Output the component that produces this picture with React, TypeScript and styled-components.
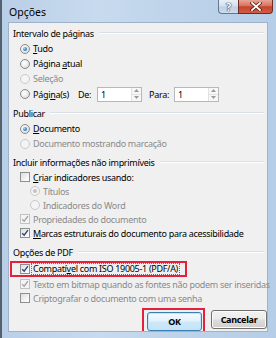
import React from "react"
import styled, { createGlobalStyle } from "styled-components"

const GlobalStyle = createGlobalStyle`
	html, body {
		margin: 0;
		padding: 0;
		background: #ffffff;
	}
	body {
		font-family: "Noto Sans", "DejaVu Sans", sans-serif;
		font-size: 9px;
		letter-spacing: -0.3px;
		color: #111;
	}
`

const Options: React.FC = () => {
	return (
		<Window>
			<TitleBar>
				<Title>Opções</Title>
				<Caption>
					<HelpButton>?</HelpButton>
					<CloseButton>
						<svg width="12" height="9" viewBox="0 0 12 9">
							<path d="M2 1 L10 8 M10 1 L2 8" stroke="#5a1c14" strokeWidth="3.4" strokeLinecap="square" />
							<path d="M2 1 L10 8 M10 1 L2 8" stroke="#ffffff" strokeWidth="1.8" strokeLinecap="square" />
						</svg>
					</CloseButton>
				</Caption>
			</TitleBar>

			<Client>
				<GroupHeader>
					<span>Intervalo de páginas</span>
					<Rule />
				</GroupHeader>
				<Row $h={15}>
					<Radio $checked />
					<Label><u>T</u>udo</Label>
				</Row>
				<Row $h={15}>
					<Radio />
					<Label>Página <u>a</u>tual</Label>
				</Row>
				<Row $h={15}>
					<Radio $disabled />
					<Label $disabled>Seleção</Label>
				</Row>
				<Row $h={16}>
					<Radio />
					<Label $w={45}>Pági<u>n</u>a(s)</Label>
					<FieldLabel $w={19}>De:</FieldLabel>
					<Spin value="1" />
					<FieldLabel $w={25} $gap={7}>Para:</FieldLabel>
					<Spin value="1" />
				</Row>

				<GroupHeader $top={4}>
					<span>Publicar</span>
					<Rule />
				</GroupHeader>
				<Row $h={15}>
					<Radio $checked />
					<Label><u>D</u>ocumento</Label>
				</Row>
				<Row $h={15}>
					<Radio $disabled />
					<Label $disabled>Documento mostrando marcação</Label>
				</Row>

				<GroupHeader $top={4}>
					<span>Incluir informações não imprimíveis</span>
					<Rule />
				</GroupHeader>
				<Row $h={14}>
					<Check />
					<Label><u>C</u>riar indicadores usando:</Label>
				</Row>
				<Row $h={14} $indent={10}>
					<Radio $disabled $checked />
					<Label $disabled>Títulos</Label>
				</Row>
				<Row $h={14} $indent={10}>
					<Radio $disabled />
					<Label $disabled>Indicadores do Word</Label>
				</Row>
				<Row $h={14}>
					<Check $checked $disabled />
					<Label $disabled>Propriedades do documento</Label>
				</Row>
				<Row $h={14}>
					<Check $checked />
					<Label><u>M</u>arcas estruturais do documento para acessibilidade</Label>
				</Row>

				<GroupHeader $top={5} $bottom={2}>
					<span>Opções de PDF</span>
					<Rule />
				</GroupHeader>
				<Highlight>
					<Check $checked />
					<FocusLabel>Compatí<u>v</u>el com ISO 19005-1 (PDF/A)</FocusLabel>
				</Highlight>
				<Row $h={14}>
					<Check $checked $disabled />
					<Label $disabled>Texto em bitmap quando as fontes não podem ser inseridas</Label>
				</Row>
				<Row $h={14}>
					<Check />
					<Label $disabled>Criptografar o documento com uma senha</Label>
				</Row>

				<Buttons>
					<ButtonMark>
						<Button $default>OK</Button>
					</ButtonMark>
					<Button>Cancelar</Button>
				</Buttons>
			</Client>
		</Window>
	)
}

const Spin: React.FC<{ value: string }> = ({ value }) => (
	<SpinBox>
		<SpinValue>{value}</SpinValue>
		<SpinArrows>
			<SpinArrow>
				<svg width="5" height="3" viewBox="0 0 5 3">
					<path d="M0 3 L2.5 0 L5 3 Z" fill="#9a9a9a" />
				</svg>
			</SpinArrow>
			<SpinArrow>
				<svg width="5" height="3" viewBox="0 0 5 3">
					<path d="M0 0 L2.5 3 L5 0 Z" fill="#9a9a9a" />
				</svg>
			</SpinArrow>
		</SpinArrows>
	</SpinBox>
)

const Check: React.FC<{ $checked?: boolean; $disabled?: boolean }> = ({ $checked, $disabled }) => (
	<CheckBox $disabled={$disabled}>
		{$checked && (
			<svg width="8" height="8" viewBox="0 0 8 8">
				<path
					d="M1.2 4.2 L3.2 6.2 L6.9 1.2"
					fill="none"
					stroke={$disabled ? "#a4a4a4" : "#33427a"}
					strokeWidth="1.4"
				/>
			</svg>
		)}
	</CheckBox>
)

const Window = styled.div`
	width: 276px;
	height: 338px;
	box-sizing: border-box;
	display: flex;
	flex-direction: column;
	border-left: 2px solid #56616e;
	background: linear-gradient(90deg, #b9cfe8 0%, #c8daee 35%, #bfd4ea 60%, #b6cde7 100%);
`

const TitleBar = styled.div`
	height: 22px;
	display: flex;
	align-items: flex-start;
	flex-shrink: 0;
`

const Title = styled.span`
	margin: 5px 0 0 7px;
	font-size: 10.5px;
	line-height: 14px;
	letter-spacing: 0;
	color: #000;
`

const Caption = styled.div`
	margin-left: auto;
	margin-right: 3px;
	display: flex;
`

const HelpButton = styled.div`
	width: 20px;
	height: 14px;
	box-sizing: border-box;
	border: 1px solid #66788f;
	border-top: none;
	border-right: none;
	border-radius: 0 0 0 4px;
	background: linear-gradient(180deg, #e8eff8 0%, #d3e0ef 48%, #bccfe5 52%, #cddcee 100%);
	display: flex;
	align-items: center;
	justify-content: center;
	font-size: 11px;
	font-weight: 700;
	color: #ffffff;
	text-shadow: 0 0 1px #2e3f58, 0 0 1px #2e3f58, 0 0 1px #2e3f58;
`

const CloseButton = styled.div`
	width: 35px;
	height: 14px;
	box-sizing: border-box;
	border: 1px solid #6e2b22;
	border-top: none;
	border-radius: 0 0 4px 0;
	background: linear-gradient(180deg, #e9a594 0%, #d77360 45%, #c5432c 52%, #d35d44 100%);
	display: flex;
	align-items: center;
	justify-content: center;
`

const Client = styled.div`
	flex: 1;
	margin: 0 8px 6px 6px;
	border: 1px solid #9eb3cb;
	background: #f0f0f0;
	padding: 3px 0 2px 0;
	display: flex;
	flex-direction: column;
`

const GroupHeader = styled.div<{ $top?: number; $bottom?: number }>`
	height: 14px;
	margin-top: ${(p) => p.$top ?? 0}px;
	margin-bottom: ${(p) => p.$bottom ?? 1}px;
	padding-left: 4px;
	padding-right: 3px;
	display: flex;
	align-items: center;
	gap: 5px;
	color: #000;
	white-space: nowrap;
`

const Rule = styled.div`
	flex: 1;
	height: 1px;
	background: #d8dfe6;
	border-bottom: 1px solid #ffffff;
`

const Row = styled.div<{ $h: number; $indent?: number }>`
	height: ${(p) => p.$h}px;
	display: flex;
	align-items: center;
	padding-left: ${(p) => 11 + (p.$indent ?? 0)}px;
	white-space: nowrap;
`

const Label = styled.span<{ $disabled?: boolean; $w?: number }>`
	margin-left: 3px;
	color: ${(p) => (p.$disabled ? "#8a8a8a" : "#000")};
	${(p) => (p.$w ? `width: ${p.$w}px;` : "")}
	u {
		text-underline-offset: 1px;
	}
`

const FieldLabel = styled.span<{ $w: number; $gap?: number }>`
	width: ${(p) => p.$w}px;
	margin-left: ${(p) => p.$gap ?? 0}px;
	color: #000;
`

const Radio = styled.span<{ $checked?: boolean; $disabled?: boolean }>`
	width: 10px;
	height: 10px;
	box-sizing: border-box;
	flex-shrink: 0;
	border-radius: 50%;
	border: 1px solid ${(p) => (p.$disabled ? "#c9c9c9" : "#8b8b8b")};
	background: ${(p) =>
		p.$disabled
			? "#f4f4f4"
			: "radial-gradient(circle at 40% 40%, #ffffff 0%, #f0f0f0 40%, #cfcfcf 100%)"};
	display: flex;
	align-items: center;
	justify-content: center;
	&::after {
		content: "";
		display: ${(p) => (p.$checked ? "block" : "none")};
		width: 4px;
		height: 4px;
		border-radius: 50%;
		background: ${(p) =>
			p.$disabled ? "#c4c4c4" : "radial-gradient(circle at 35% 35%, #a6d8ff 0%, #3b86c8 55%, #174d82 100%)"};
	}
`

const CheckBox = styled.span<{ $disabled?: boolean }>`
	width: 10px;
	height: 10px;
	box-sizing: border-box;
	flex-shrink: 0;
	border: 1px solid ${(p) => (p.$disabled ? "#c2c2c2" : "#8e8f8f")};
	background: ${(p) => (p.$disabled ? "#f4f4f4" : "linear-gradient(135deg, #dcdcdc 0%, #f7f7f7 70%, #ffffff 100%)")};
	display: flex;
	align-items: center;
	justify-content: center;
`

const SpinBox = styled.div`
	width: 45px;
	height: 15px;
	box-sizing: border-box;
	border: 1px solid #b5b8bd;
	background: #ffffff;
	display: flex;
`

const SpinValue = styled.span`
	flex: 1;
	padding-left: 3px;
	line-height: 13px;
	color: #000;
`

const SpinArrows = styled.div`
	width: 9px;
	display: flex;
	flex-direction: column;
	border-left: 1px solid #e2e2e2;
`

const SpinArrow = styled.div`
	flex: 1;
	display: flex;
	align-items: center;
	justify-content: center;
	background: #f7f7f7;
	& + & {
		border-top: 1px solid #e2e2e2;
	}
`

const Highlight = styled.div`
	height: 16px;
	box-sizing: border-box;
	width: 177px;
	margin-left: 1px;
	border: 2px solid #e3213a;
	padding-left: 8px;
	display: flex;
	align-items: center;
	white-space: nowrap;
`

const FocusLabel = styled.span`
	margin-left: 2px;
	padding: 0 1px;
	line-height: 10px;
	outline: 1px dotted #6c6c6c;
	color: #000;
`

const Buttons = styled.div`
	margin-top: auto;
	display: flex;
	align-items: flex-end;
	justify-content: flex-end;
	gap: 6px;
	padding-right: 0;
`

const ButtonMark = styled.div`
	border: 2px solid #e3213a;
	border-bottom: none;
	padding: 2px 1px 0 3px;
	margin-bottom: -2px;
	display: flex;
`

const Button = styled.div<{ $default?: boolean }>`
	width: ${(p) => (p.$default ? 55 : 56)}px;
	height: 19px;
	box-sizing: border-box;
	border-radius: 3px;
	border: 1px solid ${(p) => (p.$default ? "#3c7fb1" : "#707070")};
	background: ${(p) =>
		p.$default
			? "linear-gradient(180deg, #f4fafe 0%, #e4f2fc 48%, #cde8fa 52%, #c4e3f8 100%)"
			: "linear-gradient(180deg, #f2f2f2 0%, #ebebeb 48%, #dddddd 52%, #cfcfcf 100%)"};
	box-shadow: ${(p) => (p.$default ? "inset 0 0 0 1px #bfe6fb" : "inset 0 0 0 1px #fbfbfb")};
	display: flex;
	align-items: center;
	justify-content: center;
	font-weight: 700;
	color: #000;
`

const App: React.FC = () => (
	<>
		<GlobalStyle />
		<Options />
	</>
)

export default App
